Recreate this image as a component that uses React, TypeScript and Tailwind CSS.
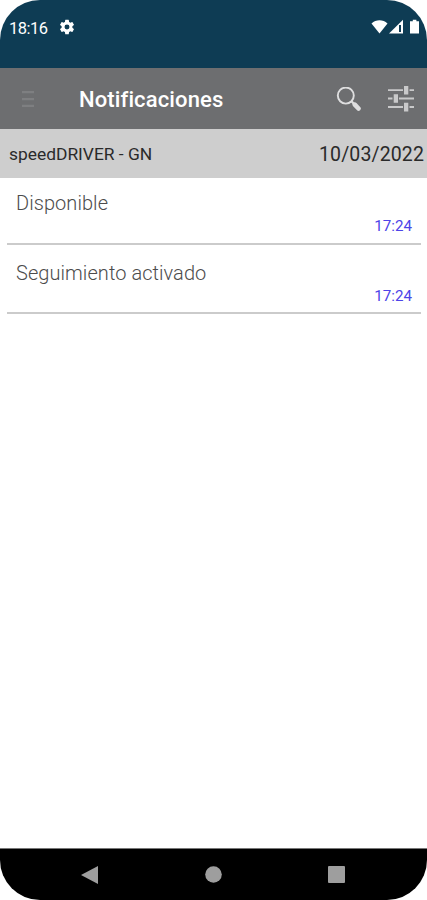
import React from "react";

interface Notification {
  id: number;
  text: string;
  time: string;
}

const notifications: Notification[] = [
  { id: 1, text: "Disponible", time: "17:24" },
  { id: 2, text: "Seguimiento activado", time: "17:24" },
];

const GearIcon = () => (
  <svg width="18" height="18" viewBox="0 0 24 24" fill="#fff">
    <path d="M19.14 12.94c.04-.3.06-.61.06-.94s-.02-.64-.07-.94l2.03-1.58a.49.49 0 0 0 .12-.61l-1.92-3.32a.49.49 0 0 0-.59-.22l-2.39.96c-.5-.38-1.03-.7-1.62-.94l-.36-2.54a.48.48 0 0 0-.48-.41h-3.84a.47.47 0 0 0-.47.41l-.36 2.54c-.59.24-1.13.57-1.62.94l-2.39-.96a.48.48 0 0 0-.59.22L2.74 8.87a.47.47 0 0 0 .12.61l2.03 1.58c-.05.3-.09.63-.09.94s.02.64.07.94l-2.03 1.58a.49.49 0 0 0-.12.61l1.92 3.32c.12.22.37.29.59.22l2.39-.96c.5.38 1.03.7 1.62.94l.36 2.54c.05.24.24.41.48.41h3.84c.24 0 .44-.17.47-.41l.36-2.54c.59-.24 1.13-.56 1.62-.94l2.39.96c.22.08.47 0 .59-.22l1.92-3.32a.47.47 0 0 0-.12-.61l-2.01-1.58zM12 15.3a3.3 3.3 0 1 1 0-6.6 3.3 3.3 0 0 1 0 6.6z" />
  </svg>
);

const StatusIcons = () => (
  <svg width="50" height="16" viewBox="0 0 50 16" fill="#fff">
    <path d="M0.5 4.6C5 0.2 12 0.2 16.5 4.6L8.5 14.6z" />
    <path d="M32 0.8v13.8H18z" />
    <path d="M29 6v7" stroke="#0e3c54" strokeWidth="2" />
    <path d="M41.8 0.8h3.6v1.4h2.6v12.4h-9V2.2h2.8z" />
  </svg>
);

const MenuIcon = () => (
  <svg width="12" height="16" viewBox="0 0 12 16" fill="#7e7f81">
    <path d="M0 0h12v2.2H0zM0 7h12v2.2H0zM0 13.8h12V16H0z" />
  </svg>
);

const SearchIcon = () => (
  <svg width="25" height="25" viewBox="0 0 25 25" fill="none" stroke="#dededf">
    <circle cx="9.8" cy="8.6" r="8" strokeWidth="1.9" />
    <path d="M15.4 14.2l3.2 3.2" strokeWidth="2.2" />
    <path d="M18.8 17.6l3.7 3.9" strokeWidth="4.6" strokeLinecap="round" />
  </svg>
);

const TuneIcon = () => (
  <svg width="26" height="26" viewBox="0 0 26 26" fill="#c9c9ca">
    <path d="M0 3.3h15v1.8H0zM21.5 3.3H26v1.8h-4.5zM0 11.6h4.5v1.8H0zM11 11.6h15v1.8H11zM0 20.1h15v1.8H0zM21.5 20.1H26v1.8h-4.5z" />
    <path d="M16 0h4.3v8.6H16zM5.7 8.2H10v8.6H5.7zM16 16.7h4.3v8.8H16z" />
  </svg>
);

const NotificationRow: React.FC<{ item: Notification }> = ({ item }) => (
  <li className="mr-[6px] ml-[7px] h-[69.5px] border-b-2 border-[#cbcbcb] pt-4 pr-[9px] pl-[9px]">
    <p className="text-[20px] leading-6 font-light tracking-[0.06px] text-[#4c4c4c]">{item.text}</p>
    <p className="text-right text-[15.2px] leading-[23px] text-[#4d44e8]">{item.time}</p>
  </li>
);

export default function App() {
  return (
    <div className="h-[900px] w-[427px] bg-white font-['Roboto',sans-serif]">
      <div className="flex h-full flex-col overflow-hidden rounded-[40px] bg-white">
        <div className="flex h-[68px] items-start justify-between bg-[#0e3c54] pt-[18px] pl-[9px] pr-[6px]">
          <div className="flex items-start gap-[10px]">
            <span className="pt-px text-[16.5px] leading-5 tracking-[-0.5px] text-white">18:16</span>
            <GearIcon />
          </div>
          <div className="pt-[1px]">
            <StatusIcons />
          </div>
        </div>

        <header className="flex h-[61px] items-center bg-[#6d6e70] pl-[22px] pr-[13px] pt-px">
          <MenuIcon />
          <h1 className="ml-[45px] flex-1 text-[22px] tracking-[0.12px] font-medium text-white">Notificaciones</h1>
          <SearchIcon />
          <span className="ml-[27px]">
            <TuneIcon />
          </span>
        </header>

        <div className="flex h-[49px] items-center justify-between bg-[#cecece] pt-[2px] pl-[9px] pr-[3px] text-[#2a2a2a]">
          <span className="text-[17.4px]">speedDRIVER - GN</span>
          <span className="text-[19.5px] tracking-[0.12px]">10/03/2022</span>
        </div>

        <ul className="flex-1 -mt-[3px]">
          {notifications.map((item) => (
            <NotificationRow key={item.id} item={item} />
          ))}
        </ul>

        <nav className="flex h-[52px] items-center justify-between border-t border-[#777] bg-black pl-[81px] pr-[82px]">
          <svg width="17" height="18" viewBox="0 0 17 18" fill="#9e9e9e">
            <path d="M0 9L17 0v18z" />
          </svg>
          <svg width="17" height="17" viewBox="0 0 17 17" fill="#9e9e9e">
            <circle cx="8.5" cy="8.5" r="8.3" />
          </svg>
          <span className="h-[17px] w-[17px] rounded-[1px] bg-[#9e9e9e]" />
        </nav>
      </div>
    </div>
  );
}
